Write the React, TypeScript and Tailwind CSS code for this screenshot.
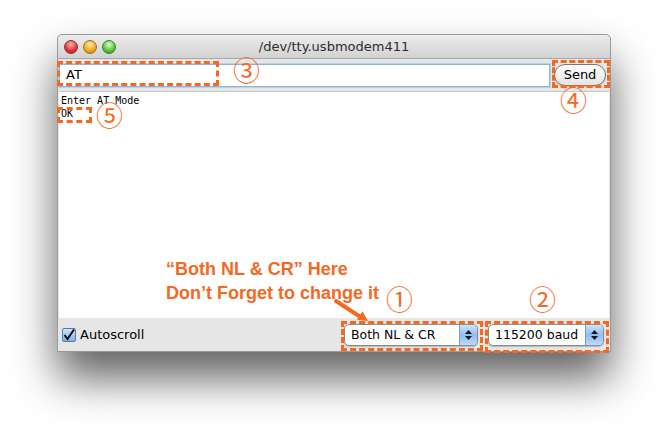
import React from "react";

const orange = "text-[#f4691f]";
const circled = { fontFamily: '"Noto Sans CJK JP", sans-serif' };

function Stepper() {
	return (
		<div className="flex flex-col items-center justify-center w-[18px] h-full rounded-r-[4px] bg-gradient-to-b from-[#cfe3fb] via-[#8fbdf0] to-[#b9dbff] border-l border-[#7a9cc6] gap-[2px]">
			<svg width="7" height="4" viewBox="0 0 7 4">
				<path d="M3.5 0 L7 4 L0 4 Z" fill="#1a1a1a" />
			</svg>
			<svg width="7" height="4" viewBox="0 0 7 4">
				<path d="M0 0 L7 0 L3.5 4 Z" fill="#1a1a1a" />
			</svg>
		</div>
	);
}

function Select({ label, width }: { label: string; width: string }) {
	return (
		<div
			className={`flex items-center h-[22px] ${width} rounded-[5px] border border-[#8c8c8c] bg-white shadow-[0_1px_1px_rgba(0,0,0,0.2)] overflow-hidden`}
		>
			<span className="flex-1 pl-[6px] text-[12.5px] text-black leading-none">{label}</span>
			<Stepper />
		</div>
	);
}

export default function App() {
	return (
		<div
			className="w-[668px] h-[431px] bg-white pt-[34px] pl-[57px] overflow-hidden"
			style={{ fontFamily: '"DejaVu Sans", "Noto Sans", sans-serif' }}
		>
			<div className="relative w-[554px] h-[318px] flex flex-col rounded-t-[5px] bg-[#e6e6e6] border border-[#9a9a9a] shadow-[0_26px_44px_rgba(0,0,0,0.62)]">
				{/* Title bar */}
				<div className="relative flex items-center h-[24px] rounded-t-[5px] bg-gradient-to-b from-[#ececec] to-[#d2d2d2] border-b border-[#a8a8a8] px-[6px] gap-[5px]">
					<span className="w-[14px] h-[14px] rounded-full bg-[radial-gradient(circle_at_50%_30%,#ffb4b4,#e0303a_60%,#a3151e)] border border-[#9a2a2a]" />
					<span className="w-[14px] h-[14px] rounded-full bg-[radial-gradient(circle_at_50%_30%,#ffe9a8,#f0a71e_60%,#b8760e)] border border-[#9c7020]" />
					<span className="w-[14px] h-[14px] rounded-full bg-[radial-gradient(circle_at_50%_30%,#d6ffc2,#5cc13a_60%,#2f8a1c)] border border-[#3b7d2b]" />
					<div className="absolute inset-0 flex items-center justify-center text-[13px] text-[#2d2d2d] pointer-events-none">
						/dev/tty.usbmodem411
					</div>
				</div>

				{/* Input row */}
				<div className="flex items-center h-[32px] pl-[1px] pr-[4px] gap-[4px]">
					<div className="flex items-center flex-1 h-[23px] bg-white border border-[#8fb3d6] shadow-[0_0_0_1px_#b9d3ee] pl-[6px] text-[13px] text-black">
						AT
					</div>
					<button className="h-[22px] w-[52px] rounded-full border border-[#777] bg-gradient-to-b from-white to-[#e4e4e4] text-[13px] text-black shadow-[0_1px_1px_rgba(0,0,0,0.2)]">
						Send
					</button>
				</div>

				{/* Output */}
				<div
					className="flex-1 mx-[1px] bg-white border-t border-[#c8c8c8] pt-[2px] pl-[2px] text-[10px] leading-[13px] text-black"
					style={{ fontFamily: '"DejaVu Sans Mono", monospace' }}
				>
					<div>Enter AT Mode</div>
					<div>OK</div>
				</div>

				{/* Bottom bar */}
				<div className="flex items-center h-[33px] pl-[4px] pr-[6px] pt-[1px]">
					<div className="flex items-center gap-[4px]">
						<span className="flex items-center justify-center w-[14px] h-[14px] rounded-[2px] border border-[#5a7aa8] bg-gradient-to-b from-[#cfe3fb] to-[#7fb2ee]">
							<svg width="12" height="12" viewBox="0 0 12 12">
								<path d="M1.5 6 L4.5 10 L11 0.5" fill="none" stroke="#111" strokeWidth="2" />
							</svg>
						</span>
						<span className="text-[13px] text-black">Autoscroll</span>
					</div>
					<div className="flex-1" />
					<Select label="Both NL & CR" width="w-[134px]" />
					<div className="w-[10px]" />
					<Select label="115200 baud" width="w-[116px]" />
				</div>

				{/* Annotations */}
				<div className="absolute left-[-1px] top-[26px] w-[162px] h-[25px] border-[3px] border-dashed border-[#f4691f]" />
				<div className={`absolute left-[175px] top-[21px] text-[27px] leading-none ${orange}`} style={circled}>③</div>

				<div className="absolute left-[494px] top-[25px] w-[58px] h-[28px] border-[3px] border-dashed border-[#f4691f]" />
				<div className={`absolute left-[502px] top-[51px] text-[27px] leading-none ${orange}`} style={circled}>④</div>

				<div className="absolute left-[-1px] top-[72px] w-[35px] h-[16px] border-[3px] border-dashed border-[#f4691f]" />
				<div className={`absolute left-[38px] top-[66px] text-[27px] leading-none ${orange}`} style={circled}>⑤</div>

				<div
					className={`absolute left-[108px] top-[222px] text-[18px] font-bold leading-[24px] ${orange}`}
					style={{ fontFamily: '"Liberation Sans", Arial, sans-serif' }}
				>
					<div>“Both NL &amp; CR” Here</div>
					<div>Don’t Forget to change it</div>
				</div>
				<svg className="absolute left-[274px] top-[262px]" width="40" height="30" viewBox="0 0 40 30">
					<path d="M4 4 L27 19" stroke="#f4691f" strokeWidth="4" strokeLinecap="round" />
					<path d="M36 24 L24.9 22.7 L30.5 14.3 Z" fill="#f4691f" />
				</svg>
				<div className={`absolute left-[328px] top-[250px] text-[27px] leading-none ${orange}`} style={circled}>①</div>
				<div className={`absolute left-[471px] top-[250px] text-[27px] leading-none ${orange}`} style={circled}>②</div>

				<div className="absolute left-[283px] top-[286px] w-[142px] h-[30px] border-[3px] border-dashed border-[#f4691f]" />
				<div className="absolute left-[427px] top-[286px] w-[124px] h-[32px] border-[3px] border-dashed border-[#f4691f]" />
			</div>
		</div>
	);
}
